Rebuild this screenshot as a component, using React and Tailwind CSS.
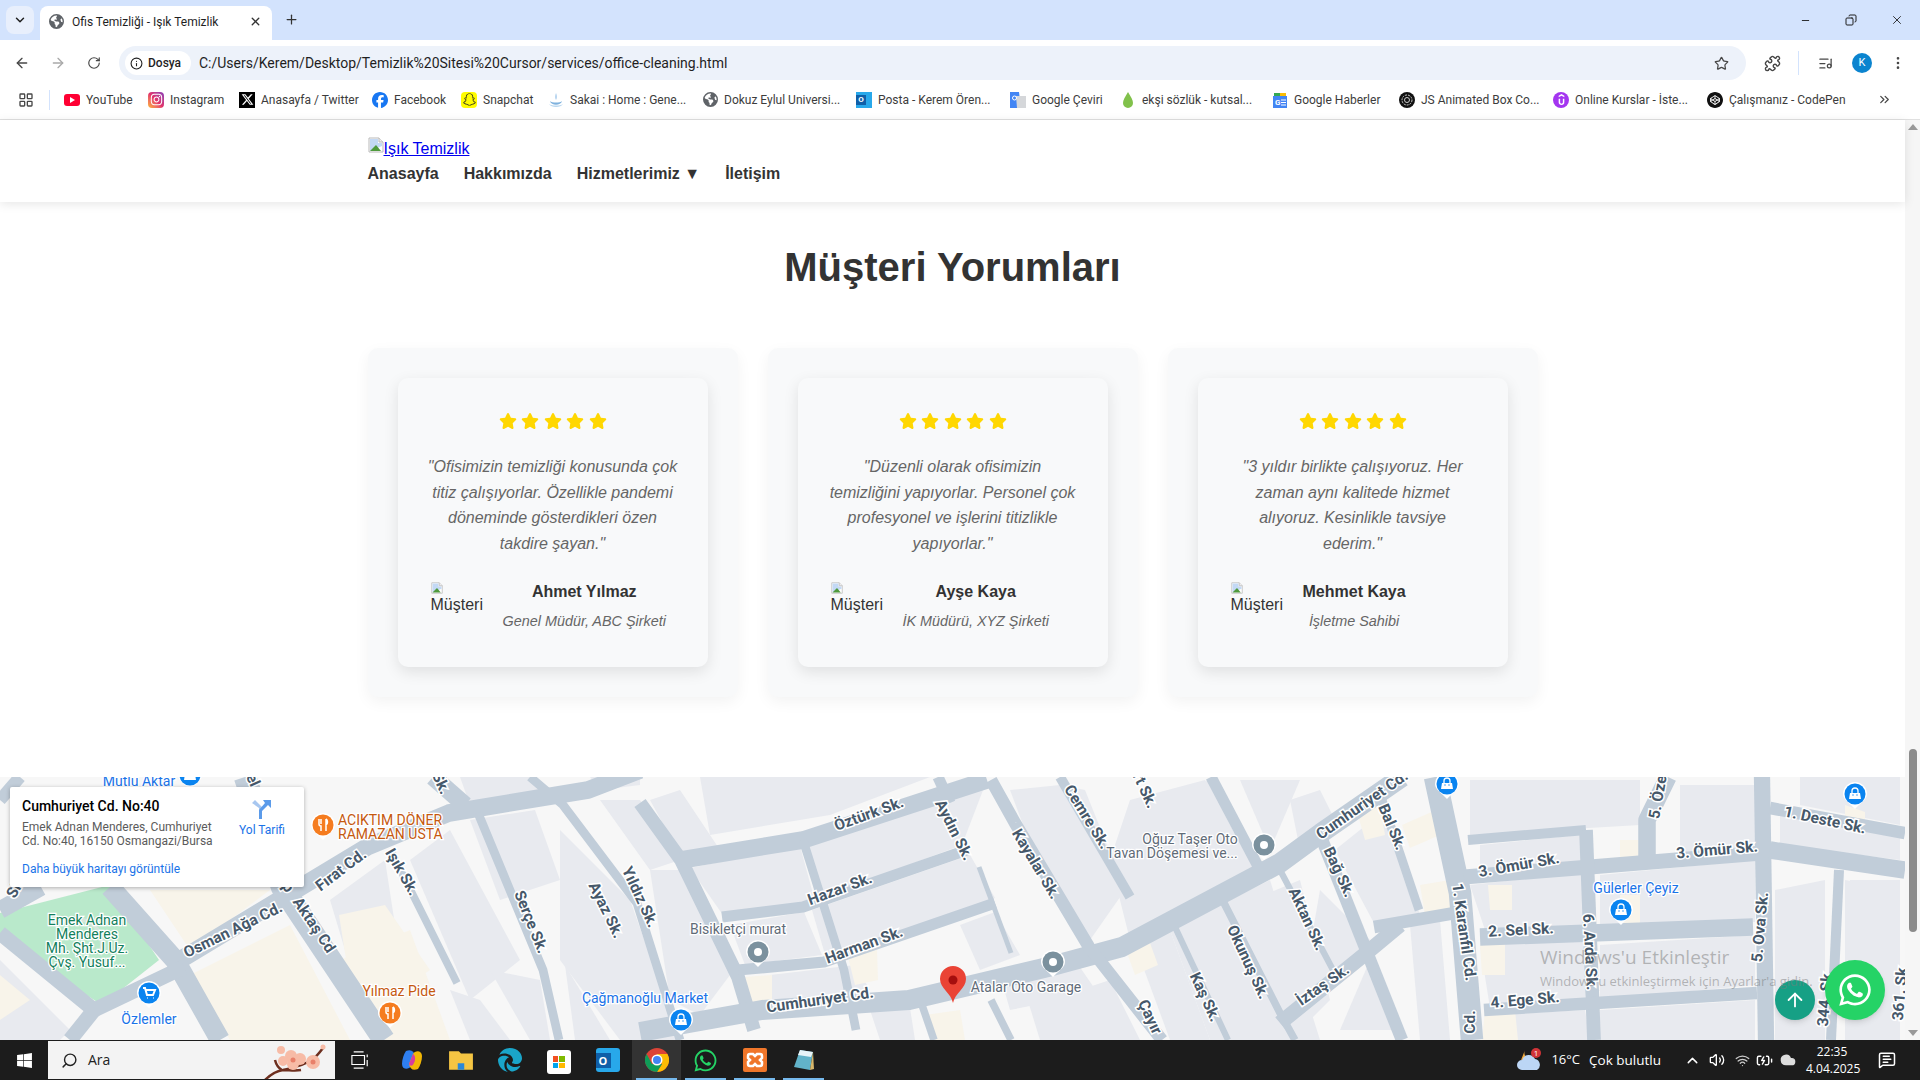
import React from "react";
import { ArrowLeft, ArrowRight, RotateCw, Star, Puzzle, EllipsisVertical, ChevronDown, X, Plus, Minus, Info, ChevronsRight, LayoutGrid, ListMusic, Search, ChevronUp, Volume2, Wifi, BatteryCharging, Cloud, MessageSquareText, ArrowUp, Copy } from "lucide-react";
import { FaYoutube, FaInstagram, FaXTwitter, FaFacebook, FaSnapchat, FaWhatsapp, FaStar, FaEdge, FaWindows, FaEarthAmericas } from "react-icons/fa6";
import { SiCodepen, SiUdemy } from "react-icons/si";

const Broken = ({ className = "" }) => (
  <svg viewBox="0 0 16 16" className={className}>
    <path d="M1 1h10l4 4v10H1z" fill="#fff" stroke="#b9b9b9" />
    <path d="M2 2h8v4h4v3L2 14z" fill="#c3d9f5" />
    <path d="M2 14l6-6 5 6z" fill="#4f9a3d" />
    <path d="M11 1v4h4" fill="#eee" stroke="#b9b9b9" />
  </svg>
);

const marks = [
  { t: "YouTube", w: "w-[46px]", i: <div className="w-4 h-3 rounded-[3px] bg-[#ff0033] flex items-center justify-center"><div className="w-0 h-0 border-y-[3px] border-y-transparent border-l-[5px] border-l-white" /></div> },
  { t: "Instagram", w: "w-[53px]", i: <div className="w-4 h-4 rounded-[4px] bg-gradient-to-tr from-[#fdb32b] via-[#e1306c] to-[#8a3ab9] flex items-center justify-center"><FaInstagram size={13} color="#fff" /></div> },
  { t: "Anasayfa / Twitter", w: "w-[95px]", i: <div className="w-4 h-4 bg-black flex items-center justify-center"><FaXTwitter size={13} color="#fff" /></div> },
  { t: "Facebook", w: "w-[51px]", i: <FaFacebook size={16} color="#1877f2" /> },
  { t: "Snapchat", w: "w-[49px]", i: <div className="w-4 h-4 rounded-[4px] bg-[#fffc00] flex items-center justify-center"><FaSnapchat size={13} color="#222" /></div> },
  { t: "Sakai : Home : Gene...", w: "w-[116px]", i: <svg viewBox="0 0 16 16" className="w-4 h-4"><path d="M8 1c1 3 1 5 0 7-1-2-1-4 0-7z" fill="#9ec6ea" /><path d="M2 9c1 5 11 5 12 0-2 2-10 2-12 0z" fill="#7fb2de" /><path d="M1 12c2 4 12 4 14 0-3 2-11 2-14 0z" fill="#b7d6ef" /></svg> },
  { t: "Dokuz Eylul Universi...", w: "w-[116px]", i: <FaEarthAmericas size={15} color="#5f6368" /> },
  { t: "Posta - Kerem Ören...", w: "w-[116px]", i: <div className="w-4 h-4 relative bg-[#28a8ea]"><div className="absolute left-0 top-[3px] w-[10px] h-[10px] bg-[#0f5fa8] text-white text-[8px] leading-[10px] text-center font-bold">O</div></div> },
  { t: "Google Çeviri", w: "w-[72px]", i: <svg viewBox="0 0 16 16" className="w-4 h-4"><path d="M0 0h9l2 16H0z" fill="#4285f4" /><path d="M6 4h10v12H7z" fill="#d5d7da" /><circle cx="4.5" cy="6" r="2" fill="none" stroke="#fff" /></svg> },
  { t: "ekşi sözlük - kutsal...", w: "w-[114px]", i: <svg viewBox="0 0 16 16" className="w-4 h-4"><path d="M8 0c3 5 5 8 5 11a5 5 0 0 1-10 0C3 8 5 5 8 0z" fill="#81c14b" /></svg> },
  { t: "Google Haberler", w: "w-[89px]", i: <svg viewBox="0 0 16 16" className="w-4 h-4"><path d="M2 1h12v5H2z" fill="#fbbc04" /><path d="M2 1h6v3H2z" fill="#34a853" /><path d="M1 4h14v12H1z" fill="#4285f4" /><text x="3" y="13" fontSize="8" fill="#fff" fontFamily="Roboto" fontWeight="700">G</text><path d="M9 8h5M9 10.500h5M9 13h5" stroke="#fff" /></svg> },
  { t: "JS Animated Box Co...", w: "w-[116px]", i: <svg viewBox="0 0 16 16" className="w-4 h-4"><circle cx="8" cy="8" r="8" fill="#111" /><circle cx="8" cy="8" r="5" fill="none" stroke="#ccc" strokeDasharray="2 1" /><circle cx="8" cy="8" r="2.500" fill="none" stroke="#ccc" /></svg> },
  { t: "Online Kurslar - İste...", w: "w-[116px]", i: <div className="w-4 h-4 rounded-full bg-[#a435f0] flex items-center justify-center"><SiUdemy size={11} color="#fff" /></div> },
  { t: "Çalışmanız - CodePen", w: "w-[116px]", i: <SiCodepen size={16} color="#111" /> },
];

const roads = [
  ["M180 960L367 847L449 813L588 790L640 770", 14],
  ["M245 777L282 887L384 1040", 18],
  ["M110 887L175 960L220 1040", 16],
  ["M0 933L94 1010L184 967", 12],
  ["M94 1010L70 1040", 12],
  ["M0 910L41 887", 14],
  ["M0 800L20 777", 10],
  ["M392 853L457 983", 6],
  ["M478 813L543 970L559 1040", 7],
  ["M433 777L465 805", 14],
  ["M530 777L563 805L637 903L680 1040", 7],
  ["M640 803L681 860L738 977L754 1030", 11],
  ["M681 860L803 840L987 780", 14],
  ["M722 917L803 907L967 850", 9],
  ["M803 840L844 970L856 1030", 7],
  ["M738 970L824 962L995 903", 9],
  ["M640 1032L689 1023L762 1010L909 1000L1048 967L1122 947L1280 863L1321 833L1402 777", 16],
  ["M991 780L1015 823L1089 947L1162 1040", 10],
  ["M979 867L1011 953", 4],
  ["M938 777L950 803", 9],
  ["M1060 777L1130 897", 8],
  ["M1211 777L1260 870", 9],
  ["M1224 903L1280 1013L1295 1040", 6],
  ["M1175 927L1228 1040", 5],
  ["M991 1000L1011 1040", 6],
  ["M922 1005L934 1040", 6],
  ["M1435 777L1460 893L1472 1040", 18],
  ["M1321 837L1402 1040", 10],
  ["M1382 800L1419 910", 7],
  ["M1374 927L1455 913", 10],
  ["M1280 1023L1370 950L1400 925", 12],
  ["M1280 870L1333 970", 5],
  ["M1464 877L1590 867L1762 853", 12],
  ["M1468 840L1586 830", 8],
  ["M1586 830L1594 1040", 11],
  ["M1480 937L1753 927", 14],
  ["M1484 1010L1757 993", 10],
  ["M1668 777L1647 820L1647 860", 14],
  ["M1762 777L1766 1040", 13],
  ["M1770 808L1905 833", 10],
  ["M1770 850L1905 870", 14],
  ["M1839 870L1831 1040", 8],
];

const blocks = [
  "690,868 800,846 816,905 725,918", "730,925 804,912 822,955 745,965", "808,840 985,785 962,845 815,900", "812,910 970,855 995,898 826,958",
  "1020,830 1085,790 1125,890 1090,940", "1130,800 1205,780 1255,870 1130,940 1110,860", "1170,930 1270,880 1320,1040 1210,1040", "1285,880 1330,960 1290,1010 1280,990",
  "1335,850 1385,810 1420,915 1375,925", "1480,845 1580,835 1585,862 1480,875", "1470,885 1585,872 1588,925 1485,930", "1600,875 1755,860 1755,922 1600,930",
  "1600,945 1755,935 1755,985 1600,1000", "1480,945 1585,940 1585,1000 1490,1008", "1600,1010 1755,1000 1755,1040 1600,1040", "1490,1015 1585,1010 1590,1040 1490,1040",
  "1780,815 1900,838 1900,860 1780,845", "1775,890 1825,880 1825,1040 1775,1040", "1845,880 1900,890 1900,1040 1845,1040", "1470,780 1640,780 1640,825 1470,835",
  "1680,785 1755,785 1755,845 1680,855", "470,820 535,810 560,880 500,900", "410,860 450,830 520,960 470,1000", "490,970 540,980 550,1040 530,1040",
  "560,830 630,900 680,1040 620,1040 560,960", "600,800 640,800 680,860 650,870", "0,960 40,1000 70,1030 60,1040 0,1040", "220,1000 280,950 320,1040 250,1040",
  "1050,1000 1110,980 1140,1040 1060,1040", "870,1010 910,1008 915,1040 880,1040", "650,800 680,790 720,850 680,855", "1000,975 1040,975 1060,1000 1010,1010", "1180,790 1210,780 1240,850 1200,860",
  "330,900 385,860 395,925 345,950",
  "770,975 855,965 870,990 770,1002", "960,925 995,912 1020,955 980,970", "650,870 690,870 730,975 700,1015 670,1000", "1010,790 1060,785 1085,790 1040,870", "1135,945 1170,930 1210,1040 1170,1040",
  "1020,975 1075,960 1130,1040 1040,1040", "1320,890 1380,950 1300,1005", "1410,925 1440,920 1450,1040 1420,1040", "1370,960 1400,1030 1340,1030", "1290,800 1320,790 1340,830 1300,850", "1240,780 1300,780 1270,850",
  "460,777 530,777 560,800 470,805", "590,777 640,777 640,785 600,790", "700,777 930,777 830,815 710,835", "1800,777 1900,777 1900,825 1800,805", "1600,990 1590,990 1590,1000", "1850,880 1900,880 1900,900 1850,900",
  "450,990 480,1000 510,1040 470,1040", "565,965 610,1040 575,1040", "1240,905 1300,880 1330,1000 1290,1040 1270,1010", "1130,900 1220,860 1230,890 1150,940",
];

const beiges = [
  "339,915 385,905 430,970 400,990 350,985", "340,960 410,930 450,1040 385,1040", "925,1015 960,1010 965,1040 930,1040", "744,977 772,975 772,1007 744,1010", "848,957 877,950 878,980 855,985",
  "1126,950 1150,943 1158,965 1135,975", "1420,885 1450,880 1452,910 1425,915", "1480,945 1505,942 1505,975 1482,975", "1620,840 1643,840 1643,863 1620,863", "1488,885 1512,885 1512,910 1490,910",
  "1845,805 1865,812 1865,825 1845,820", "1485,1010 1515,1010 1518,1040 1482,1040", "1358,815 1380,805 1385,835 1365,840", "1402,825 1436,810 1440,835 1410,848", "0,975 30,1000 0,1020",
  "150,890 270,890 190,950", "190,975 290,925 350,1040 230,1040", "1620,895 1640,895 1640,925 1620,925",
];

const roadLabels = [
  ["Osman Ağa Cd.", 233, 935, -26], ["Aktaş Cd", 314, 930, 56], ["p", 288, 892, 56], ["Fırat Cd.", 341, 875, -37], ["Işık Sk.", 402, 877, 60], ["Serçe Sk.", 531, 927, 68], ["Ayaz Sk.", 606, 915, 64], ["Yıldız Sk.", 640, 902, 65],
  ["Sk.", 441, 788, 65], ["el", 253, 785, 65], ["Sk.", 16, 892, -60],
  ["Öztürk Sk.", 869, 819, -20], ["Aydın Sk.", 954, 835, 63], ["Kayalar Sk.", 1036, 869, 59], ["Cemre Sk.", 1087, 822, 58], ["Hazar Sk.", 840, 894, -20], ["Harman Sk.", 864, 950, -20], ["Cumhuriyet Cd.", 820, 1005, -8],
  ["Okunuş Sk.", 1248, 967, 65], ["Kaş Sk.", 1205, 1002, 65], ["Çayır", 1150, 1022, 65], ["Sert Sk.", 1141, 787, 65],
  ["Cumhuriyet Cd.", 1362, 810, -35], ["Bal Sk.", 1392, 832, 67], ["Bağ Sk.", 1339, 877, 65], ["Aktan Sk.", 1307, 924, 65], ["İztaş Sk.", 1323, 990, -35], ["1. Karanfil Cd.", 1464, 937, 82], ["Cd.", 1470, 1027, -90],
  ["3. Ömür Sk.", 1519, 870, -10], ["3. Ömür Sk.", 1717, 855, -5], ["5. Öze", 1658, 802, -80], ["1. Deste Sk.", 1825, 825, 12], ["2. Sel Sk.", 1521, 935, -3], ["4. Ege Sk.", 1525, 1005, -5], ["6. Arda Sk.", 1590, 957, 87], ["5. Ova Sk.", 1760, 932, -85], ["344. Sk", 1825, 1005, -85], ["361. Sk", 1900, 999, -85],
];

const poi = [
  ["Mutlu Aktar", 139, 786, "#1a73e8"], ["Özlemler", 149, 1024, "#1a73e8"], ["Çağmanoğlu Market", 645, 1003, "#1a73e8"], ["Gülerler Çeyiz", 1636, 893, "#1a73e8"],
  ["Yılmaz Pide", 399, 996, "#c5590f"], ["Bisikletçi murat", 738, 934, "#5f6b78"], ["Atalar Oto Garage", 1026, 992, "#5f6b78"], ["Oğuz Taşer Oto", 1190, 844, "#5f6b78"], ["Tavan Döşemesi ve...", 1172, 858, "#5f6b78"],
  ["Emek Adnan", 87, 925, "#137f5c"], ["Menderes", 87, 939, "#137f5c"], ["Mh. Şht.J.Uz.", 87, 953, "#137f5c"], ["Çvş. Yusuf...", 87, 967, "#137f5c"],
];

const Pin = ({ x, y, c, kind }) => (
  <g transform={`translate(${x} ${y})`}>
    <path d="M-12 0a12 12 0 1 1 24 0c0 6-7 9-12 15C-5 9-12 6-12 0z" fill="#fff" />
    <circle r="10.500" fill={c} />
    {kind === "dot" && <circle r="4" fill="#fff" />}
    {kind === "bag" && (
      <g>
        <path d="M-5-1h10l1 6h-12z" fill="#fff" />
        <path d="M-3-1v-2a3 3 0 0 1 6 0v2" fill="none" stroke="#fff" strokeWidth="1.300" />
        <circle cx="-2" cy="1" r=".7" fill={c} />
        <circle cx="2" cy="1" r=".7" fill={c} />
      </g>
    )}
    {kind === "cart" && <path d="M-6-5h2l2 7h6l2-5h-9M-2 5h.5M4 5h.5" fill="none" stroke="#fff" strokeWidth="2" />}
    {kind === "fork" && <path d="M-4-6v5a2 2 0 0 0 2 2v5M-2-6v5M3-6v12M3-6c2 1 2 5 0 6" fill="none" stroke="#fff" strokeWidth="1.500" />}
  </g>
);

const MapArt = () => (
  <svg viewBox="0 777 1905 263" className="absolute inset-0 w-full h-full">
    <rect x="0" y="777" width="1905" height="263" fill="#f7f7f7" />
    {blocks.map((p, i) => <polygon key={i} points={p} fill="#e8eaef" />)}
    {beiges.map((p, i) => <polygon key={i} points={p} fill="#f8f4ea" />)}
    <polygon points="0,913 12,910 102,887 110,887 159,960 102,1005 0,940" fill="#b9e9cb" />
    <path d="M55 925c25-15 55 0 45 30" fill="none" stroke="#d5e6dc" strokeWidth="4" />
    {roads.map(([d, w], i) => <path key={i} d={d} fill="none" stroke="#c1cdd9" strokeWidth={w * 1.25} strokeLinejoin="round" />)}
    <g fontFamily="Roboto, sans-serif" fontSize="15.500" fontWeight="700" fill="#46586a" stroke="#fff" strokeWidth="3" paintOrder="stroke" textAnchor="middle">
      {roadLabels.map(([t, x, y, r], i) => <text key={i} x={x} y={y} transform={`rotate(${r} ${x} ${y - 5})`}>{t}</text>)}
    </g>
    <g fontFamily="Roboto, sans-serif" fontSize="14" stroke="#fff" strokeWidth="2.500" paintOrder="stroke" textAnchor="middle">
      {poi.map(([t, x, y, c], i) => <text key={i} x={x} y={y} fill={c}>{t}</text>)}
      <text x="338" y="825" fill="#c5590f" textAnchor="start">ACIKTIM DÖNER</text>
      <text x="338" y="839" fill="#c5590f" textAnchor="start">RAMAZAN USTA</text>
    </g>
    <Pin x={323} y={825} c="#f57c1f" kind="fork" />
    <Pin x={390} y={1013} c="#f57c1f" kind="fork" />
    <Pin x={149} y={993} c="#0a84f0" kind="cart" />
    <Pin x={190} y={775} c="#0a84f0" kind="bag" />
    <Pin x={681} y={1020} c="#0a84f0" kind="bag" />
    <Pin x={1621} y={910} c="#0a84f0" kind="bag" />
    <Pin x={1447} y={784} c="#0a84f0" kind="bag" />
    <Pin x={1855} y={794} c="#0a84f0" kind="bag" />
    <Pin x={758} y={952} c="#7b919e" kind="dot" />
    <Pin x={1053} y={962} c="#7b919e" kind="dot" />
    <Pin x={1264} y={845} c="#7b919e" kind="dot" />
    <path d="M953 1003c-2-10-13-15-13-24a13 13 0 0 1 26 0c0 9-11 14-13 24z" fill="#ea4335" />
    <circle cx="953" cy="980" r="4.500" fill="#a50e0e" />
  </svg>
);

const reviews = [
  { q: ['"Ofisimizin temizliği konusunda çok', "titiz çalışıyorlar. Özellikle pandemi", "döneminde gösterdikleri özen", 'takdire şayan."'], n: "Ahmet Yılmaz", r: "Genel Müdür, ABC Şirketi" },
  { q: ['"Düzenli olarak ofisimizin', "temizliğini yapıyorlar. Personel çok", "profesyonel ve işlerini titizlikle", 'yapıyorlar."'], n: "Ayşe Kaya", r: "İK Müdürü, XYZ Şirketi" },
  { q: ['"3 yıldır birlikte çalışıyoruz. Her', "zaman aynı kalitede hizmet", "alıyoruz. Kesinlikle tavsiye", 'ederim."'], n: "Mehmet Kaya", r: "İşletme Sahibi" },
];

const Review = ({ d }) => (
  <div className="w-[370px] h-[349px] p-[30px] bg-[#f8f9fa] rounded-[10px] shadow-[0_5px_15px_rgba(0,0,0,0.05)]">
    <div className="h-[289px] px-[30px] pt-[35px] bg-[#f8f9fa] rounded-[10px] shadow-[0_5px_15px_rgba(0,0,0,0.1)] flex flex-col">
      <div className="flex justify-center gap-[4.500px] h-4 items-center">
        {[0, 1, 2, 3, 4].map((i) => <FaStar key={i} size={18} color="#ffd700" className="shrink-0" />)}
      </div>
      <div className="mt-[25px] text-center italic text-base leading-[25.600px] text-[#666] whitespace-nowrap">
        {d.q.map((l, i) => <div key={i}>{l}</div>)}
      </div>
      <div className="mt-[23px] flex items-start">
        <div className="w-[60px] mr-[15px] pl-[3px] pt-[3px] text-base leading-[18px] text-[#333] shrink-0">
          <Broken className="w-3 h-3 mb-[2px]" />
          <div>Müşteri</div>
        </div>
        <div className="text-center whitespace-nowrap">
          <div className="font-bold text-base leading-[25.600px] text-[#333]">{d.n}</div>
          <div className="mt-[5px] italic text-[14.400px] leading-[22.400px] text-[#666]">{d.r}</div>
        </div>
      </div>
    </div>
  </div>
);

const Bar = () => (
  <div className="h-10 bg-[#d3e3fd] flex items-end relative shrink-0">
    <div className="mb-[6px] ml-[6px] w-7 h-7 rounded-lg bg-[#e8effc] flex items-center justify-center"><ChevronDown size={14} strokeWidth={2.5} color="#1f1f1f" /></div>
    <div className="ml-[6px] w-[232px] h-[34px] bg-white rounded-t-lg flex items-center pl-[9px] pr-[10px] pb-[3px]">
      <FaEarthAmericas size={15} color="#5f6368" />
      <span className="ml-2 w-[143px] text-xs text-[#1f1f1f] whitespace-nowrap">Ofis Temizliği - Işık Temizlik</span>
      <X size={13} strokeWidth={2.5} className="ml-auto" color="#333" />
    </div>
    <Plus size={15} strokeWidth={2} color="#333" className="ml-[12px] mb-[13px]" />
    <div className="ml-auto flex items-center h-10 mr-[16px] self-start">
      <Minus size={11} color="#1f1f1f" />
      <Copy size={12} color="#1f1f1f" className="-scale-x-100 ml-[34px]" />
      <X size={14} strokeWidth={1.5} color="#1f1f1f" className="ml-[33px]" />
    </div>
  </div>
);

const Toolbar = () => (
  <div className="h-10 bg-white rounded-t-lg flex items-center relative shrink-0 pt-[6px]">
    <ArrowLeft size={16} color="#474747" className="ml-[14px]" />
    <ArrowRight size={16} color="#a9a9a9" className="ml-[20px]" />
    <RotateCw size={14} color="#474747" className="ml-[21px]" />
    <div className="ml-[18px] w-[1627px] h-[34px] rounded-full bg-[#edf2fa] flex items-center pl-[6px] pr-[17px]">
      <div className="w-[66px] h-6 rounded-full bg-white flex items-center pl-[5px]">
        <Info size={13} color="#1f1f1f" />
        <span className="ml-[5px] text-xs font-medium text-[#1f1f1f]">Dosya</span>
      </div>
      <span className="ml-2 text-sm text-[#1f1f1f] whitespace-nowrap">C:/Users/Kerem/Desktop/Temizlik%20Sitesi%20Cursor/services/office-cleaning.html</span>
      <Star size={15} color="#474747" className="ml-auto" />
    </div>
    <Puzzle size={17} color="#474747" className="ml-[18px]" />
    <div className="ml-[17px] w-px h-6 bg-[#d3e3fd]" />
    <ListMusic size={15} color="#474747" className="ml-[19px]" />
    <div className="ml-[19px] w-5 h-5 rounded-full bg-[#0b84cf] text-white text-[11px] flex items-center justify-center">K</div>
    <EllipsisVertical size={16} color="#474747" className="ml-[18px]" />
  </div>
);

const Marks = () => (
  <div className="h-10 bg-white border-b border-[#e0e0e0] flex items-center shrink-0">
    <LayoutGrid size={16} color="#474747" className="ml-[18px]" />
    <div className="ml-[15px] mr-[14px] w-px h-5 bg-[#d3e3fd]" />
    <div className="flex items-center gap-4">
      {marks.map((m) => (
        <div key={m.t} className="flex items-center gap-[6px]">
          <div className="w-4 h-4 flex items-center justify-center shrink-0">{m.i}</div>
          <span className={`${m.w} text-xs text-[#3c3c3c] whitespace-nowrap`}>{m.t}</span>
        </div>
      ))}
    </div>
    <ChevronsRight size={15} color="#474747" className="ml-[32px]" />
  </div>
);

const Header = () => (
  <div className="h-[82px] bg-white shadow-[0_2px_10px_rgba(0,0,0,0.1)] relative z-10 shrink-0 font-['Liberation_Sans',sans-serif]">
    <div className="w-[1170px] mx-auto pt-[17px]">
      <div className="flex items-start h-[22px]">
        <Broken className="w-4 h-4 shrink-0" />
        <a href="#" className="mt-[3px] text-base leading-[18px] text-[#0000ee] underline">Işık Temizlik</a>
      </div>
      <div className="mt-px flex gap-[25px] text-base leading-[28px] font-bold text-[#333]">
        <span>Anasayfa</span>
        <span>Hakkımızda</span>
        <span>Hizmetlerimiz ▼</span>
        <span>İletişim</span>
      </div>
    </div>
  </div>
);

const InfoCard = () => (
  <div className="absolute left-[10px] top-[10px] w-[294px] h-[100px] bg-white shadow-[0_1px_4px_rgba(0,0,0,0.3)] rounded-[2px] font-['Roboto',sans-serif] pl-3 pt-[10px] flex flex-col">
    <div className="flex h-[59px]">
      <div className="w-[204px]">
        <div className="text-sm leading-[18px] font-medium text-black">Cumhuriyet Cd. No:40</div>
        <div className="mt-[5px] text-xs leading-[14px] text-[#5b5b5b]">Emek Adnan Menderes, Cumhuriyet Cd. No:40, 16150 Osmangazi/Bursa</div>
      </div>
      <div className="ml-[5px] w-[62px] pt-[3px] flex flex-col items-center">
        <svg viewBox="0 0 20 20" className="w-5 h-5"><path d="M0 3l3-3 7 7v6H7V8z" fill="#a8c7f0" /><path d="M11 0h8v8l-3-3-6 6v8H7v-9l6-7z" fill="#5b9bea" /></svg>
        <span className="mt-[2px] text-xs text-[#1a73e8] whitespace-nowrap">Yol Tarifi</span>
      </div>
    </div>
    <a href="#" className="mt-[5px] text-xs text-[#1a73e8] whitespace-nowrap">Daha büyük haritayı görüntüle</a>
  </div>
);

const Map = () => (
  <div className="flex-1 relative overflow-hidden mt-[80px]">
    <MapArt />
    <InfoCard />
    <button className="absolute left-[1775px] top-[203px] w-10 h-10 rounded-full bg-[#16a085] flex items-center justify-center shadow-md"><ArrowUp size={22} color="#fff" /></button>
    <button className="absolute left-[1825px] top-[183px] w-[60px] h-[60px] rounded-full bg-[#25d366] flex items-center justify-center shadow-md"><FaWhatsapp size={36} color="#fff" /></button>
    <div className="absolute left-[1540px] top-[167px] font-['Open_Sans',sans-serif] text-[#7a7a7a]/50 whitespace-nowrap pointer-events-none">
      <div className="text-[19px] leading-[26px]">Windows'u Etkinleştir</div>
      <div className="text-[13px] leading-[20px] mt-px">Windows'u etkinleştirmek için Ayarlar'a gidin.</div>
    </div>
  </div>
);

const Chrome = () => (
  <svg viewBox="0 0 24 24" className="w-6 h-6">
    <circle cx="12" cy="12" r="12" fill="#db4437" />
    <path d="M12 24A12 12 0 0 0 22.400 6H12l5 10z" fill="#fbbc04" />
    <path d="M1.600 6A12 12 0 0 0 12 24l5-8H7z" fill="#0f9d58" />
    <circle cx="12" cy="12" r="5.500" fill="#fff" />
    <circle cx="12" cy="12" r="4" fill="#4285f4" />
  </svg>
);

const slots = [
  { i: <svg viewBox="0 0 24 24" className="w-6 h-6"><path d="M6 3c5-2 8 0 9 5l-4 10c-2 4-9 4-9-2 0-5 2-10 4-13z" fill="#2f7ff0" /><path d="M18 21c-5 2-8 0-9-5l4-10c2-4 9-4 9 2 0 5-2 10-4 13z" fill="#f2b705" /><path d="M9 16l4-10c2 1 3 5 1 9s-4 3-5 1z" fill="#d63c9f" /></svg> },
  { i: <svg viewBox="0 0 24 24" className="w-[26px] h-[26px]"><path d="M1 4h9l2 2h11v15H1z" fill="#f5c543" /><path d="M9 15h6v6H9z" fill="#2b88d8" /></svg> },
  { i: <FaEdge size={24} color="#1aa5c9" /> },
  { i: <div className="w-6 h-6 bg-white rounded-[3px] mt-1 grid grid-cols-2 gap-[1px] p-[6px]"><div className="bg-[#f25022]" /><div className="bg-[#7fba00]" /><div className="bg-[#00a4ef]" /><div className="bg-[#ffb900]" /></div> },
  { i: <div className="relative w-6 h-6 bg-[#28a8ea] rounded-[3px]"><div className="absolute left-0 top-[5px] w-[15px] h-[15px] bg-[#0f5fa8] text-white text-[11px] leading-[15px] text-center font-bold">O</div></div> },
  { i: <Chrome />, b: "bg-[#333]", u: true },
  { i: <FaWhatsapp size={25} color="#25d366" />, u: true },
  { i: <svg viewBox="0 0 24 24" className="w-6 h-6"><rect width="24" height="24" rx="2" fill="#f0762a" /><path d="M7 6h3l2 2 2-2h3a2 2 0 0 1 2 2v2l-2 2 2 2v2a2 2 0 0 1-2 2h-3l-2-2-2 2H7a2 2 0 0 1-2-2v-2l2-2-2-2V8a2 2 0 0 1 2-2z" fill="none" stroke="#fff" strokeWidth="2.500" /></svg>, u: true },
  { i: <svg viewBox="0 0 24 24" className="w-6 h-6"><path d="M8 2l13 2-3 18-16-3z" fill="#62b3c9" /><path d="M8 2l13 2-2 5-13-2z" fill="#e8f4f8" /><path d="M21 4l1 17-4 1z" fill="#d7b66a" /></svg>, u: true },
];

const Taskbar = () => (
  <div className="h-10 bg-[#1c1c1c] flex items-center shrink-0 font-['Open_Sans',sans-serif] relative">
    <div className="w-12 flex justify-center"><FaWindows size={17} color="#fff" /></div>
    <div className="w-[287px] h-[38px] bg-[#f3f3f3] flex items-center pl-[13px] overflow-hidden relative">
      <Search size={17} color="#222" className="-scale-x-100" />
      <span className="ml-[10px] text-sm text-[#222]">Ara</span>
      <svg viewBox="250 1041 85 38" className="absolute right-0 top-0 w-[85px] h-[38px]">
        <path d="M265 1080c6-6 12-9 18-10 10-2 22-5 30-11 4-3 7-7 10-11M275 1060c1 4 3 8 7 10M283 1070c6 0 12 1 18 0" fill="none" stroke="#6d2f1f" strokeWidth="2.500" />
        <g fill="#f7bba6"><circle cx="291" cy="1056" r="6" /><circle cx="300" cy="1059" r="6" /><circle cx="293" cy="1064" r="6" /><circle cx="283" cy="1061" r="5" /><circle cx="313" cy="1062" r="7" /><circle cx="281" cy="1050" r="4" /><circle cx="323" cy="1047" r="2.500" /></g>
        <g fill="#e8806a"><circle cx="293" cy="1060" r="2.500" /><circle cx="313" cy="1062" r="2.500" /></g>
      </svg>
    </div>
    <div className="w-[49px] flex justify-center">
      <svg viewBox="0 0 20 20" className="w-[18px] h-[18px]" fill="none" stroke="#fff" strokeWidth="1.300"><path d="M3 1h11M3 19h11M1 5h14v10H1zM18 4v3M18 10v7" /></svg>
    </div>
    <div className="ml-[3px] flex">
      {slots.map((s, i) => (
        <div key={i} className={`w-[49px] h-10 relative flex items-center justify-center ${s.b || ""}`}>
          {s.i}
          {s.u && <div className="absolute bottom-0 left-[4px] right-[4px] h-[2px] bg-[#76b9ed]" />}
        </div>
      ))}
    </div>
    <div className="ml-auto flex items-center h-10 text-white">
      <svg viewBox="0 0 26 24" className="w-[26px] h-6"><path d="M8 2a7 7 0 0 0 3 9l-7 1z" fill="#f2a93b" /><path d="M5 22a5 5 0 0 1 0-10 7 7 0 0 1 13-1 6 6 0 0 1 2 11z" fill="#bcd6f5" /><circle cx="19" cy="5" r="5" fill="#d13438" /><text x="19" y="8" fontSize="8" fill="#fff" textAnchor="middle">1</text></svg>
      <span className="ml-[8px] text-[13px]">16°C</span>
      <span className="ml-[9px] text-[13.500px]">Çok bulutlu</span>
      <ChevronUp size={17} color="#fff" className="ml-[23px]" />
      <Volume2 size={16} color="#fff" className="ml-[8px]" />
      <Wifi size={15} color="#ccc" className="ml-[10px]" />
      <BatteryCharging size={17} color="#fff" className="ml-[6px]" />
      <Cloud size={16} color="#ddd" fill="#ddd" className="ml-[7px]" />
      <div className="ml-[10px] w-[52px] text-center text-xs leading-[17px]"><div>22:35</div><div>4.04.2025</div></div>
      <MessageSquareText size={18} color="#fff" className="ml-[20px] mr-[24px]" />
    </div>
  </div>
);

export default function App() {
  return (
    <div className="w-[1920px] h-[1080px] flex flex-col overflow-hidden bg-white font-['Roboto',sans-serif]">
      <Bar />
      <Toolbar />
      <Marks />
      <div className="flex-1 flex min-h-0">
        <div className="w-[1905px] flex flex-col min-h-0">
          <Header />
          <div className="font-['Liberation_Sans',sans-serif] flex flex-col items-center shrink-0 pt-[42px]">
            <h2 className="text-[40px] leading-[46px] font-bold text-[#333]">Müşteri Yorumları</h2>
            <div className="mt-[58px] w-[1170px] flex gap-[30px]">
              {reviews.map((d) => <Review key={d.n} d={d} />)}
            </div>
          </div>
          <Map />
        </div>
        <div className="w-[15px] bg-[#f6f6f6] flex flex-col items-center relative">
          <div className="mt-[4px] w-0 h-0 border-x-[5px] border-x-transparent border-b-[6px] border-b-[#999]" />
          <div className="absolute top-[629px] left-[4px] w-2 h-[183px] rounded-full bg-[#8b8b8b]" />
          <div className="absolute bottom-[4px] w-0 h-0 border-x-[5px] border-x-transparent border-t-[6px] border-t-[#999]" />
        </div>
      </div>
      <Taskbar />
    </div>
  );
}
